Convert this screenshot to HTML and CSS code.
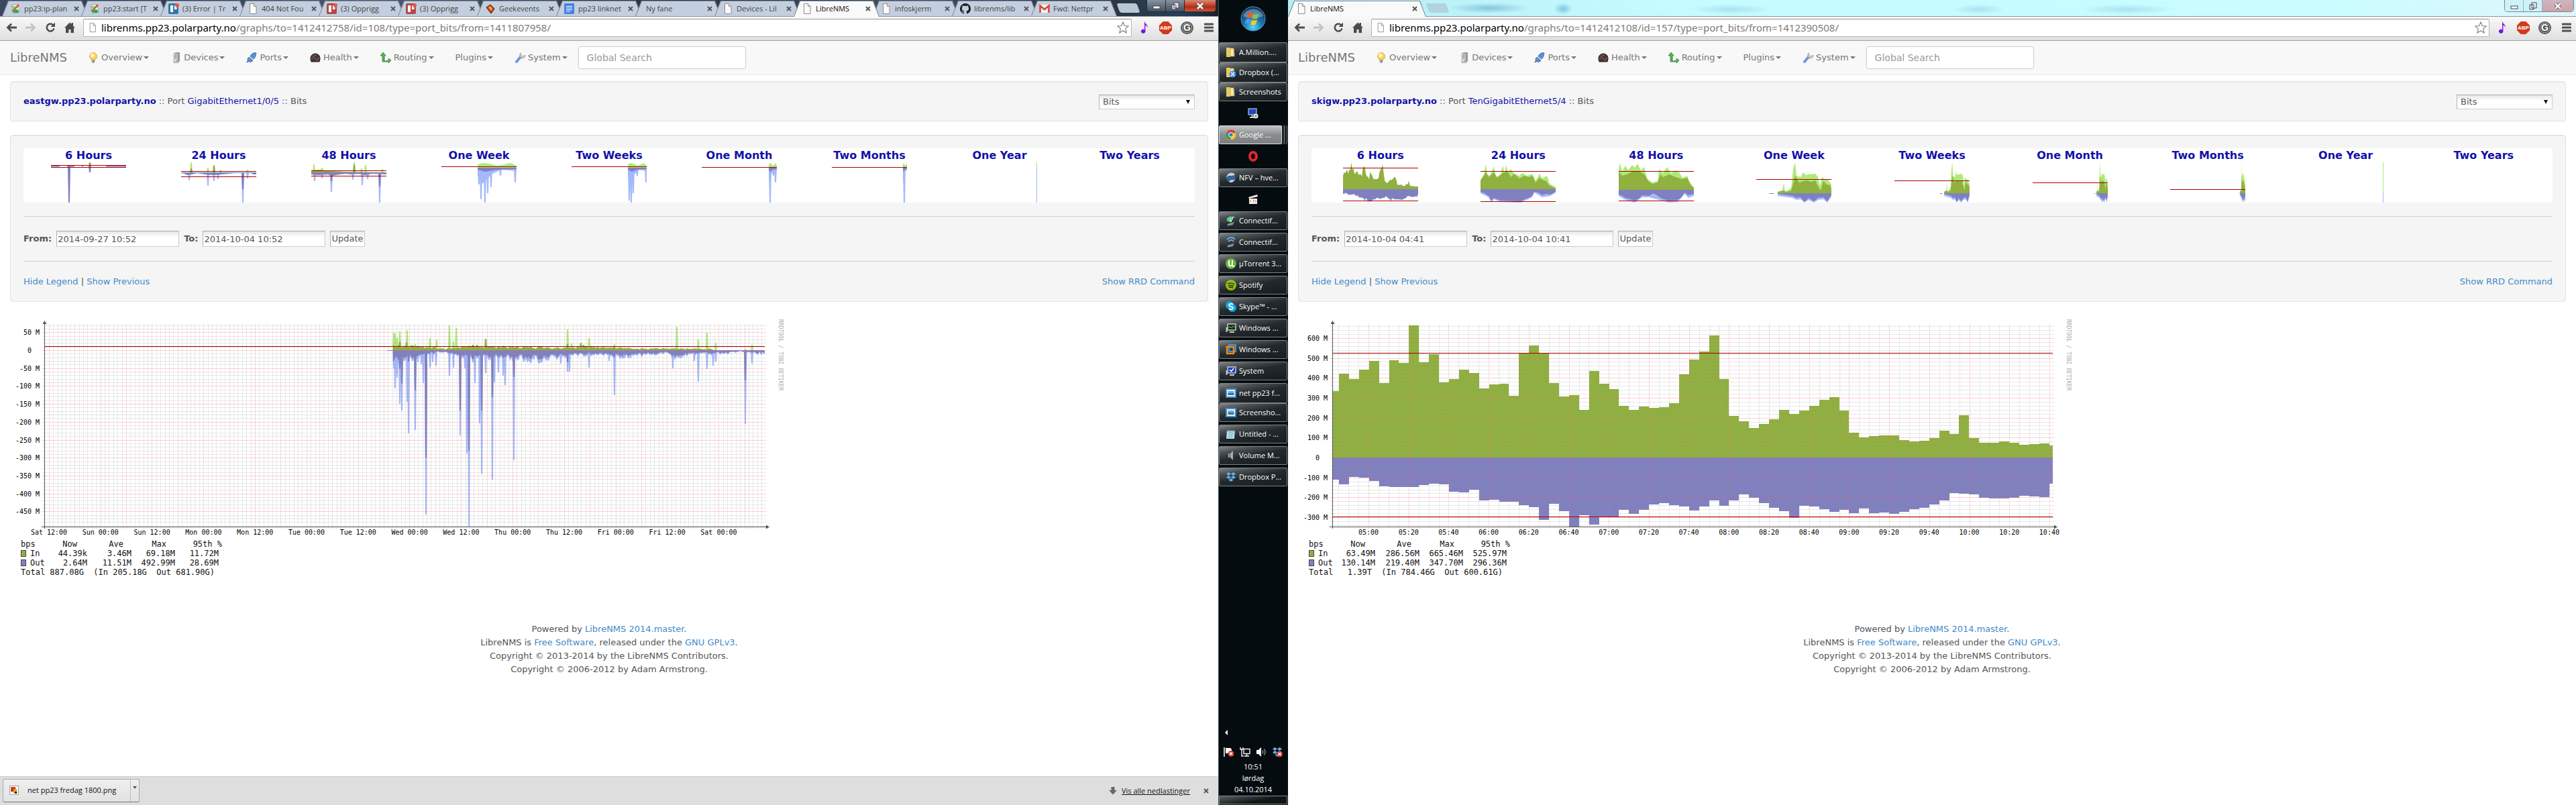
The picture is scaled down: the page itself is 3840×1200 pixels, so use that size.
FILE: index.html
```html
<!DOCTYPE html>
<html lang="en">
<head>
<meta charset="utf-8">
<title>LibreNMS</title>
<link rel="stylesheet" href="styles.css">
</head>
<body>
<svg class="sprite" aria-hidden="true">
  <symbol id="i-page" viewBox="0 0 16 16"><path d="M3.500.500h6l3.500 4v11H3.500z" fill="#fbfbfb" stroke="#8d8d8d"/><path d="M9.500.500v4H13" fill="#ddd" stroke="#8d8d8d"/></symbol>
  <symbol id="i-wiki" viewBox="0 0 16 16"><path d="M2 3l9-2 3 10-9 4z" fill="#f2f2ea" stroke="#888" stroke-width=".7"/><path d="M2 10c2 4 7 6 12 3l-3-4z" fill="#3aa648"/><path d="M5 9l7-8 2 2-7 7-3 1z" fill="#d2552c"/><path d="M3 5h5M3 7h4" stroke="#3aa648"/></symbol>
  <symbol id="i-trello" viewBox="0 0 16 16"><rect width="15" height="16" y="0" rx="2" fill="#2f79a8"/><rect x="3" y="3" width="4" height="10" fill="#fff"/><rect x="9" y="3" width="3.500" height="6" fill="#fff"/><circle cx="13" cy="3" r="3" fill="#f0544f"/></symbol>
  <symbol id="i-trello-red" viewBox="0 0 16 16"><rect width="15" height="16" rx="2" fill="#b04a46"/><rect x="3" y="3" width="4" height="10" fill="#fff"/><rect x="9" y="3" width="3.500" height="6" fill="#fff"/><circle cx="13" cy="3" r="3" fill="#f0544f"/></symbol>
  <symbol id="i-geek" viewBox="0 0 16 16"><path d="M2 6l6-4 6 6-5 7z" fill="#d8421c" stroke="#2a1a10"/><path d="M5 6l3-2 3 4-2 3z" fill="#f7a823"/></symbol>
  <symbol id="i-doc" viewBox="0 0 16 16"><rect x="0" width="15" height="16" rx="1" fill="#4583e6"/><path d="M3 4.500h9M3 7h9M3 9.500h9M3 12h6" stroke="#fff" stroke-width="1.200"/></symbol>
  <symbol id="i-github" viewBox="0 0 16 16"><path d="M8 0a8 8 0 0 0-2.500 15.600c.4 0 .5-.2.500-.4v-1.500c-2.200.5-2.700-1-2.700-1-.4-.9-.9-1.100-.9-1.100-.7-.5.100-.5.100-.5.800.1 1.200.8 1.200.8.700 1.300 1.900.9 2.300.7.100-.5.300-.9.500-1.100C4.700 11.300 2.900 10.600 2.900 7.600c0-.9.300-1.600.8-2.200-.1-.2-.4-1 .1-2.100 0 0 .7-.2 2.200.8a7.700 7.700 0 0 1 4 0c1.500-1 2.200-.8 2.200-.8.400 1.100.2 1.900.1 2.100.5.600.8 1.300.8 2.200 0 3.100-1.900 3.700-3.700 3.900.3.300.6.800.6 1.500v2.200c0 .2.100.5.600.4A8 8 0 0 0 8 0z" fill="#1c2024"/></symbol>
  <symbol id="i-gmail" viewBox="0 0 16 16"><rect y="2" width="16" height="12" rx="1" fill="#f3f3f3"/><path d="M1.500 14V3.500L8 9l6.500-5.500V14" fill="none" stroke="#d5473b" stroke-width="2.600"/></symbol>
  <symbol id="i-x" viewBox="0 0 8 8"><path d="M1 1l6 6M7 1L1 7" stroke="#555" stroke-width="1.800"/></symbol>
  <symbol id="i-back" viewBox="0 0 16 16"><path d="M16 8H3M8 2.500L2.500 8 8 13.500" fill="none" stroke="#4c4c4c" stroke-width="2.800"/></symbol>
  <symbol id="i-fwd" viewBox="0 0 16 16"><path d="M0 8h13M8 2.500L13.500 8 8 13.500" fill="none" stroke="#c3c3c3" stroke-width="2.800"/></symbol>
  <symbol id="i-reload" viewBox="0 0 16 16"><path d="M12.500 4.500A5.500 5.500 0 1 0 13.500 9.500" fill="none" stroke="#4c4c4c" stroke-width="2.600"/><path d="M15 .5V7H8.500z" fill="#4c4c4c"/></symbol>
  <symbol id="i-home" viewBox="0 0 16 16"><path d="M0 8.500L8 .5l2.500 2.500V1h2.500v4.500L16 8.500h-2V16H9.500v-5h-3v5H2V8.500z" fill="#4c4c4c"/></symbol>
  <symbol id="i-star" viewBox="0 0 18 18"><path d="M9 1l2.300 5.500 5.900.5-4.500 3.900L14.100 17 9 13.700 3.900 17l1.400-6.100L.8 7l5.900-.5z" fill="#fff" stroke="#7a7a7a" stroke-width="1.100"/></symbol>
  <symbol id="i-note" viewBox="0 0 14 20"><path d="M7 0c.5 4 5.500 5 5 10-.7-2.700-2.200-3.700-4-4v10.500A3.600 3.200 0 1 1 6.500 13V0z" fill="#7a10f0"/></symbol>
  <symbol id="i-abp" viewBox="0 0 20 20"><path d="M6 0h8l6 6v8l-6 6H6l-6-6V6z" fill="#d23a1c"/></symbol>
  <symbol id="i-g" viewBox="0 0 20 20"><circle cx="10" cy="10" r="9" fill="#fff" stroke="#555" stroke-width="2"/><circle cx="10" cy="10" r="7.500" fill="#555"/></symbol>
  <symbol id="i-menu" viewBox="0 0 14 14"><path d="M1 2h12M1 7h12M1 12h12" stroke="#505050" stroke-width="3" stroke-linecap="round"/></symbol>
  <symbol id="i-bulb" viewBox="0 0 16 16"><circle cx="8" cy="6" r="5.500" fill="#fbd257" stroke="#dba23b" stroke-width=".8"/><circle cx="7" cy="4.500" r="2.800" fill="#fff6cf"/><path d="M5.500 11h5v3l-1.500 2H7l-1.500-2z" fill="#9a9a9a"/></symbol>
  <symbol id="i-server" viewBox="0 0 16 16"><path d="M5 2l3-2h6v13l-3 3H5z" fill="#9b9b9b"/><path d="M5 2h6v13.500H5z" fill="#d9d9d9" stroke="#888" stroke-width=".6"/><path d="M6.500 4.500h3M6.500 6.500h3M6.500 8.500h3" stroke="#777"/><circle cx="9" cy="12.500" r="1" fill="#45b04a"/></symbol>
  <symbol id="i-plug" viewBox="0 0 16 16"><path d="M1 15l4-4" stroke="#4f78b8" stroke-width="2"/><path d="M4 7l6 5c-2 3-5 3-7 1s-1-4 1-6zM7 4c2-3 6-4 8-3-1 4-1 7-4 9L6 6z" fill="#5b8fd6" stroke="#34619f" stroke-width=".8"/></symbol>
  <symbol id="i-gauge" viewBox="0 0 16 16"><path d="M2 14C-1 7 3 2 8 2s9 5 6 12z" fill="#3a3a3a" stroke="#222"/><path d="M4 5l8 8" stroke="#e03a2a" stroke-width="1.300"/><path d="M2.500 9h1.500M8 3.500v1.500M13.500 9H12" stroke="#ccc"/></symbol>
  <symbol id="i-route" viewBox="0 0 16 16"><path d="M4 0l4 5H6v8h3l4-2-1-2 4 3-4 4v-2H3V5H0z" fill="#5cb458" stroke="#2f7c30" stroke-width=".8"/></symbol>
  <symbol id="i-wrench" viewBox="0 0 16 16"><path d="M9 1l1 4 3 1 3-2c0 4-3 5-6 5l-2-2c-1-2 0-5 1-6z" fill="#d5d5d5" stroke="#888" stroke-width=".8"/><path d="M8 8L3 14" stroke="#6b96de" stroke-width="3.800" stroke-linecap="round"/></symbol>
  <symbol id="i-folder" viewBox="0 0 16 16"><path d="M1 1h6v14H1z" fill="#e8c964"/><path d="M7 2h5l1 12H7z" fill="#f6e79f" stroke="#c9a33e" stroke-width=".7"/><path d="M13 9v4" stroke="#4f9ddb" stroke-width="1.500"/></symbol>
  <symbol id="i-dropbox" viewBox="0 0 16 16"><path d="M4.500 1L8 3.500 4.500 6 1 3.500zM11.500 1L15 3.500 11.500 6 8 3.500zM4.500 6L8 8.500 4.500 11 1 8.500zM11.500 6L15 8.500 11.500 11 8 8.500zM8 10l3.500 2.500L8 15l-3.500-2.500z" fill="#5eb3f5"/></symbol>
  <symbol id="i-dbfolder" viewBox="0 0 16 16"><use href="#i-folder"/><circle cx="10.500" cy="10.500" r="5" fill="#3f93dc"/><path d="M8 7.500l5 6M13 7.500l-5 6" stroke="#d9eeff" stroke-width="1.500"/></symbol>
  <symbol id="i-pc" viewBox="0 0 16 16"><rect x="1" y="1" width="12" height="9" fill="#2146c4" stroke="#ddd"/><path d="M3 14h7M6.500 10v4" stroke="#ccc" stroke-width="2"/><circle cx="12" cy="12" r="3.500" fill="#e9f4e6"/><path d="M10 12h4M12 10v4" stroke="#2f9a3c"/></symbol>
  <symbol id="i-chrome" viewBox="0 0 16 16"><circle cx="8" cy="8" r="7.500" fill="#f5c518"/><path d="M8 8L1.500 4.200A7.500 7.500 0 0 1 14.500 4.200z" fill="#dd3b2c"/><path d="M8 8L1.500 4.200A7.500 7.500 0 0 0 7.500 15.500z" fill="#36a045"/><circle cx="8" cy="8" r="3.700" fill="#fff"/><circle cx="8" cy="8" r="2.800" fill="#3f79d9"/></symbol>
  <symbol id="i-opera" viewBox="0 0 16 16"><ellipse cx="8" cy="8" rx="5" ry="6" fill="none" stroke="#e2262d" stroke-width="4"/></symbol>
  <symbol id="i-globe" viewBox="0 0 16 16"><circle cx="8" cy="8" r="7" fill="#38618c"/><path d="M1 8c4-6 7 0 13-5-2-4-12-4-13 5zM5 14c3-5 6-1 9-4-2 5-6 6-9 4z" fill="#b7d1e6"/></symbol>
  <symbol id="i-clip" viewBox="0 0 16 16"><path d="M1 5l13-4 1 3L2 7z" fill="#eee"/><rect x="2" y="7" width="12" height="8" fill="#f5f5f5"/><path d="M4 9v4M7 9h2v4M12 9v4" stroke="#e06c2c" fill="none"/></symbol>
  <symbol id="i-fan" viewBox="0 0 16 16"><path d="M2 9C0 3 6 0 14 2L7 10z" fill="#4bb56e"/><path d="M3 4l5 6M7 2l1 8M11 2L8 10" stroke="#d7f3df"/><path d="M2 15c2-5 6-2 11-6l-2 5c-3 1-6 2-9 1z" fill="#8b9092"/></symbol>
  <symbol id="i-wifi" viewBox="0 0 16 16"><path d="M2 4c4-4 9-4 12 0M4 7c3-3 6-3 8 0" fill="none" stroke="#67a7e4" stroke-width="2"/><path d="M2 15c2-5 6-2 11-6l-2 5c-3 1-6 2-9 1z" fill="#8b9092"/></symbol>
  <symbol id="i-ut" viewBox="0 0 16 16"><circle cx="8" cy="8" r="8" fill="#6cb33f"/><path d="M5 3v6c0 3 5 3 5 0V3M10 9c0 3 1 3 3 3" fill="none" stroke="#fff" stroke-width="2"/></symbol>
  <symbol id="i-spotify" viewBox="0 0 16 16"><circle cx="8" cy="8" r="8" fill="#91be0f"/><path d="M3 6c4-1.500 7-1 10 .6M4 9c3-1 6-.7 8 .6M5 11.500c2-.8 4-.5 6 .5" fill="none" stroke="#222" stroke-width="1.400"/></symbol>
  <symbol id="i-skype" viewBox="0 0 16 16"><circle cx="6" cy="6" r="6" fill="#0aa6ea"/><circle cx="10" cy="10" r="6" fill="#0aa6ea"/><path d="M11 5c-2-2-6-1-6 1 0 3 6 1 6 4 0 2-4 3-6 1" fill="none" stroke="#fff" stroke-width="1.800"/></symbol>
  <symbol id="i-mon" viewBox="0 0 16 16"><rect x="3" y="2" width="12" height="9" fill="#142a16" stroke="#c9c9c9" stroke-width="1.500"/><path d="M4 7l3-1 2 2 2-3 3 2" fill="none" stroke="#4ddb55"/><path d="M6 14h7M1.500 7v7" stroke="#c9c9c9" stroke-width="2"/></symbol>
  <symbol id="i-vm" viewBox="0 0 16 16"><rect x="5" y="1" width="10" height="10" fill="none" stroke="#4a90c8" stroke-width="2.500"/><rect x="2" y="4" width="10" height="10" fill="none" stroke="#f08a1c" stroke-width="2.500"/></symbol>
  <symbol id="i-sys" viewBox="0 0 16 16"><rect x="3" y="2" width="12" height="9" fill="#1c3fc0" stroke="#c9c9c9" stroke-width="1.500"/><path d="M6 6l2.500 2.500L12 4" fill="none" stroke="#fff" stroke-width="1.500"/><path d="M6 14h7M1.500 7v7" stroke="#c9c9c9" stroke-width="2"/></symbol>
  <symbol id="i-pic" viewBox="0 0 16 16"><path d="M0 1h16v14H0z" fill="#3d8fd0"/><rect x="2" y="3" width="12" height="10" fill="#e8f3fa"/><rect x="3.500" y="5" width="9" height="3" fill="#69aee0"/><rect x="3.500" y="8" width="9" height="3" fill="#3c6f86"/></symbol>
  <symbol id="i-pad" viewBox="0 0 16 16"><path d="M2 2h12l-1 13H1z" fill="#b7e0ec"/><path d="M2 2h12v2H2z" fill="#6b8d99"/><path d="M4 6h8M4 9h8M3 12h8" stroke="#6ba7bb"/></symbol>
  <symbol id="i-vol" viewBox="0 0 16 16"><path d="M4 5h2v6H4zM7 5l4-4v14l-4-4z" fill="#a9adb0"/></symbol>
  <symbol id="i-flag" viewBox="0 0 16 16"><path d="M1 1v14" stroke="#fff" stroke-width="1.500"/><path d="M3 2h7l2 2v6H3z" fill="#fff"/><circle cx="11" cy="10.500" r="4.500" fill="#d63a2c"/><path d="M9 8.500l4 4M13 8.500l-4 4" stroke="#fff" stroke-width="1.400"/></symbol>
  <symbol id="i-net" viewBox="0 0 16 16"><path d="M1 1v3h4V1M3 4v10h3" fill="none" stroke="#fff" stroke-width="1.300"/><rect x="6" y="3.500" width="9" height="7" fill="#111" stroke="#fff" stroke-width="1.300"/><path d="M7 14h7M10.500 11v3" stroke="#fff" stroke-width="1.300"/></symbol>
  <symbol id="i-sound" viewBox="0 0 16 16"><path d="M1 5h3v6H1zM4 5l4-4v14l-4-4z" fill="#fff"/><path d="M10 5.500c1 1.500 1 3.500 0 5M12.500 3.500c2 3 2 6 0 9" fill="none" stroke="#ddd"/></symbol>
  <symbol id="i-dberr" viewBox="0 0 16 16"><use href="#i-dropbox"/><circle cx="11.500" cy="11" r="4.500" fill="#d63a3c"/><path d="M9.500 9l4 4M13.500 9l-4 4" stroke="#fff" stroke-width="1.400"/></symbol>
  <symbol id="i-down" viewBox="0 0 12 12"><path d="M3.500 0h5v5H12l-6 6.500L0 5h3.500z" fill="#686868"/></symbol>
  <symbol id="i-png" viewBox="0 0 16 16"><rect x=".500" y=".500" width="15" height="15" fill="#fff" stroke="#999"/><path d="M2.500 2.500h8v8h-8z" fill="#c7321d"/><path d="M7 6h6v7H7z" fill="#e9a21c"/><circle cx="11" cy="12" r="2" fill="#222"/></symbol>
</svg>

<div class="desktop">

<section class="window left">
  <header class="strip">
    <div class="tabs">
      <div class="tab"><svg class="ic"><use href="#i-wiki"/></svg><span>pp23:ip-plan</span><svg class="x"><use href="#i-x"/></svg></div>
      <div class="tab"><svg class="ic"><use href="#i-wiki"/></svg><span>pp23:start [T</span><svg class="x"><use href="#i-x"/></svg></div>
      <div class="tab"><svg class="ic"><use href="#i-trello"/></svg><span>(3) Error | Tr</span><svg class="x"><use href="#i-x"/></svg></div>
      <div class="tab"><svg class="ic"><use href="#i-page"/></svg><span>404 Not Fou</span><svg class="x"><use href="#i-x"/></svg></div>
      <div class="tab"><svg class="ic"><use href="#i-trello-red"/></svg><span>(3) Opprigg</span><svg class="x"><use href="#i-x"/></svg></div>
      <div class="tab"><svg class="ic"><use href="#i-trello-red"/></svg><span>(3) Opprigg</span><svg class="x"><use href="#i-x"/></svg></div>
      <div class="tab"><svg class="ic"><use href="#i-geek"/></svg><span>Geekevents</span><svg class="x"><use href="#i-x"/></svg></div>
      <div class="tab"><svg class="ic"><use href="#i-doc"/></svg><span>pp23 linknet</span><svg class="x"><use href="#i-x"/></svg></div>
      <div class="tab plain"><span>Ny fane</span><svg class="x"><use href="#i-x"/></svg></div>
      <div class="tab"><svg class="ic"><use href="#i-page"/></svg><span>Devices - Lil</span><svg class="x"><use href="#i-x"/></svg></div>
      <div class="tab active"><svg class="ic"><use href="#i-page"/></svg><span>LibreNMS</span><svg class="x"><use href="#i-x"/></svg></div>
      <div class="tab"><svg class="ic"><use href="#i-page"/></svg><span>infoskjerm</span><svg class="x"><use href="#i-x"/></svg></div>
      <div class="tab"><svg class="ic"><use href="#i-github"/></svg><span>librenms/lib</span><svg class="x"><use href="#i-x"/></svg></div>
      <div class="tab"><svg class="ic"><use href="#i-gmail"/></svg><span>Fwd: Nettpr</span><svg class="x"><use href="#i-x"/></svg></div>
      <button class="newtab" aria-label="New tab"></button>
    </div>
    <div class="winctl">
      <button aria-label="Minimize"><svg viewBox="0 0 12 12"><rect x="1" y="6" width="10" height="4" fill="#fff" stroke="#445"/></svg></button>
      <button aria-label="Restore"><svg viewBox="0 0 12 12"><path d="M4 1h7v8H4zM1 4h6v7H1z" fill="#eee" stroke="#445"/></svg></button>
      <button class="close" aria-label="Close"><svg viewBox="0 0 12 12"><path d="M2 2l8 8M10 2l-8 8" stroke="#445" stroke-width="4"/><path d="M2 2l8 8M10 2l-8 8" stroke="#fff" stroke-width="2.500"/></svg></button>
    </div>
  </header>
  <div class="toolbar">
    <svg class="tb"><use href="#i-back"/></svg><svg class="tb"><use href="#i-fwd"/></svg><svg class="tb"><use href="#i-reload"/></svg><svg class="tb"><use href="#i-home"/></svg>
    <div class="omnibox"><svg class="ic"><use href="#i-page"/></svg><span class="url"><b>librenms.pp23.polarparty.no</b>/graphs/to=1412412758/id=108/type=port_bits/from=1411807958/</span><svg class="star"><use href="#i-star"/></svg></div>
    <div class="ext"><svg class="note"><use href="#i-note"/></svg><span class="badge"><svg><use href="#i-abp"/></svg><b>ABP</b></span><span class="badge g"><svg><use href="#i-g"/></svg><b>G</b></span><svg class="menu"><use href="#i-menu"/></svg></div>
  </div>
  <nav class="navbar">
    <a class="brand" href="#">LibreNMS</a>
    <a class="item" href="#"><svg><use href="#i-bulb"/></svg>Overview<i></i></a>
    <a class="item" href="#"><svg><use href="#i-server"/></svg>Devices<i></i></a>
    <a class="item" href="#"><svg><use href="#i-plug"/></svg>Ports<i></i></a>
    <a class="item" href="#"><svg><use href="#i-gauge"/></svg>Health<i></i></a>
    <a class="item" href="#"><svg><use href="#i-route"/></svg>Routing<i></i></a>
    <a class="item" href="#">Plugins<i></i></a>
    <a class="item" href="#"><svg><use href="#i-wrench"/></svg>System<i></i></a>
    <input class="search" type="text" placeholder="Global Search" aria-label="Global Search">
  </nav>
  <main class="content">
    <div class="well head">
      <div><a class="dev" href="#">eastgw.pp23.polarparty.no</a> :: Port <a class="port" href="#">GigabitEthernet1/0/5</a> :: Bits</div>
      <div class="pick"><select aria-label="Graph type"><option>Bits</option></select></div>
    </div>
    <div class="well">
      <div class="thumbs" data-set="east">
        <a href="#">6 Hours</a><a href="#">24 Hours</a><a href="#">48 Hours</a><a href="#">One Week</a><a href="#">Two Weeks</a><a href="#">One Month</a><a href="#">Two Months</a><a href="#">One Year</a><a href="#">Two Years</a>
      </div>
      <hr>
      <form class="range">
        <label for="from1">From:</label><input id="from1" type="text" value="2014-09-27 10:52">
        <label for="to1">To:</label><input id="to1" type="text" value="2014-10-04 10:52">
        <button type="button">Update</button>
      </form>
      <hr>
      <div class="links"><span><a href="#">Hide Legend</a> | <a href="#">Show Previous</a></span><a href="#">Show RRD Command</a></div>
    </div>
    <div class="graph" id="graph-east"></div>
    <table class="legend">
      <tr><th>bps</th><th>Now</th><th>Ave</th><th>Max</th><th>95th %</th></tr>
      <tr><td><span class="key in"></span>In</td><td>44.39k</td><td>3.46M</td><td>69.18M</td><td>11.72M</td></tr>
      <tr><td><span class="key out"></span>Out</td><td>2.64M</td><td>11.51M</td><td>492.99M</td><td>28.69M</td></tr>
      <tr><td colspan="5">Total 887.08G&nbsp; (In 205.18G&nbsp; Out 681.90G)</td></tr>
    </table>
    <footer>
      <div>Powered by <a href="#">LibreNMS 2014.master</a>.</div>
      <div>LibreNMS is <a href="#">Free Software</a>, released under the <a href="#">GNU GPLv3</a>.</div>
      <div>Copyright © 2013-2014 by the LibreNMS Contributors.</div>
      <div>Copyright © 2006-2012 by Adam Armstrong.</div>
    </footer>
  </main>
  <div class="downloads">
    <div class="dl"><button class="file"><svg><use href="#i-png"/></svg>net pp23 fredag 1800.png</button><button class="more" aria-label="More"><i></i></button></div>
    <div class="all"><svg><use href="#i-down"/></svg><a href="#">Vis alle nedlastinger</a><svg class="x"><use href="#i-x"/></svg></div>
  </div>
</section>

<aside class="taskbar">
  <button class="orb" aria-label="Start"><svg viewBox="0 0 38 38">
    <defs><radialGradient id="orbfill" cx=".5" cy=".85" r=".8"><stop offset="0" stop-color="#4fd8ff"/><stop offset=".5" stop-color="#1b6fae"/><stop offset="1" stop-color="#0d3a63"/></radialGradient></defs>
    <circle cx="19" cy="19" r="18" fill="url(#orbfill)" stroke="#5f94b4"/><path d="M4 15a15.500 14 0 0 1 30 0c-8 4-22 4-30 0z" fill="#fff" opacity=".3"/>
    <path d="M11 11c3-2 5-1 7 0l-2 7c-2-1-4-2-7 0z" fill="#f0592a"/><path d="M19.500 11.500c3 2 5 1 8 0l-2 7c-3 1.500-5 1-8 0z" fill="#8cc63f"/><path d="M8.500 20c3-2 5-1 7 0l-2 7c-2-1-4-2-7 0z" fill="#3ea5e8"/><path d="M17 20.500c3 2 5 1 8 0l-2 7c-3 1.500-5 1-8 0z" fill="#fcc62c"/></svg></button>
  <div class="group"><button class="task"><svg><use href="#i-folder"/></svg>A.Million....</button><button class="task"><svg><use href="#i-dbfolder"/></svg>Dropbox (...</button><button class="task"><svg><use href="#i-folder"/></svg>Screenshots</button></div>
  <button class="task bare" aria-label="Remote desktop"><svg><use href="#i-pc"/></svg></button>
  <button class="task lit"><svg><use href="#i-chrome"/></svg>Google ...</button>
  <button class="task bare" aria-label="Opera"><svg><use href="#i-opera"/></svg></button>
  <button class="task"><svg><use href="#i-globe"/></svg>NFV – hve...</button>
  <button class="task bare" aria-label="Media player"><svg><use href="#i-clip"/></svg></button>
  <button class="task"><svg><use href="#i-fan"/></svg>Connectif...</button>
  <button class="task"><svg><use href="#i-wifi"/></svg>Connectif...</button>
  <button class="task"><svg><use href="#i-ut"/></svg>µTorrent 3...</button>
  <button class="task"><svg><use href="#i-spotify"/></svg>Spotify</button>
  <button class="task"><svg><use href="#i-skype"/></svg>Skype™ - ...</button>
  <button class="task"><svg><use href="#i-mon"/></svg>Windows ...</button>
  <button class="task"><svg><use href="#i-vm"/></svg>Windows ...</button>
  <button class="task"><svg><use href="#i-sys"/></svg>System</button>
  <div class="group"><button class="task"><svg><use href="#i-pic"/></svg>net pp23 f...</button><button class="task"><svg><use href="#i-pic"/></svg>Screensho...</button></div>
  <button class="task"><svg><use href="#i-pad"/></svg>Untitled - ...</button>
  <button class="task"><svg><use href="#i-vol"/></svg>Volume M...</button>
  <button class="task"><svg><use href="#i-dropbox"/></svg>Dropbox P...</button>
  <div class="tray">
    <i class="chev"></i>
    <div class="trayicons"><svg><use href="#i-flag"/></svg><svg><use href="#i-net"/></svg><svg><use href="#i-sound"/></svg><svg><use href="#i-dberr"/></svg></div>
    <div class="clock"><div>10:51</div><div>lørdag</div><div>04.10.2014</div></div>
    <button class="peek" aria-label="Show desktop"></button>
  </div>
</aside>

<section class="window right">
  <header class="strip">
    <div class="tabs">
      <div class="tab active"><svg class="ic"><use href="#i-page"/></svg><span>LibreNMS</span><svg class="x"><use href="#i-x"/></svg></div>
      <button class="newtab" aria-label="New tab"></button>
    </div>
    <div class="winctl">
      <button aria-label="Minimize"><svg viewBox="0 0 12 12"><rect x="1" y="6" width="10" height="4" fill="#fff" stroke="#445"/></svg></button>
      <button aria-label="Restore"><svg viewBox="0 0 12 12"><path d="M4 1h7v8H4zM1 4h6v7H1z" fill="#eee" stroke="#445"/></svg></button>
      <button class="close" aria-label="Close"><svg viewBox="0 0 12 12"><path d="M2 2l8 8M10 2l-8 8" stroke="#445" stroke-width="4"/><path d="M2 2l8 8M10 2l-8 8" stroke="#fff" stroke-width="2.500"/></svg></button>
    </div>
  </header>
  <div class="toolbar">
    <svg class="tb"><use href="#i-back"/></svg><svg class="tb"><use href="#i-fwd"/></svg><svg class="tb"><use href="#i-reload"/></svg><svg class="tb"><use href="#i-home"/></svg>
    <div class="omnibox"><svg class="ic"><use href="#i-page"/></svg><span class="url"><b>librenms.pp23.polarparty.no</b>/graphs/to=1412412108/id=157/type=port_bits/from=1412390508/</span><svg class="star"><use href="#i-star"/></svg></div>
    <div class="ext"><svg class="note"><use href="#i-note"/></svg><span class="badge"><svg><use href="#i-abp"/></svg><b>ABP</b></span><span class="badge g"><svg><use href="#i-g"/></svg><b>G</b></span><svg class="menu"><use href="#i-menu"/></svg></div>
  </div>
  <nav class="navbar">
    <a class="brand" href="#">LibreNMS</a>
    <a class="item" href="#"><svg><use href="#i-bulb"/></svg>Overview<i></i></a>
    <a class="item" href="#"><svg><use href="#i-server"/></svg>Devices<i></i></a>
    <a class="item" href="#"><svg><use href="#i-plug"/></svg>Ports<i></i></a>
    <a class="item" href="#"><svg><use href="#i-gauge"/></svg>Health<i></i></a>
    <a class="item" href="#"><svg><use href="#i-route"/></svg>Routing<i></i></a>
    <a class="item" href="#">Plugins<i></i></a>
    <a class="item" href="#"><svg><use href="#i-wrench"/></svg>System<i></i></a>
    <input class="search" type="text" placeholder="Global Search" aria-label="Global Search">
  </nav>
  <main class="content">
    <div class="well head">
      <div><a class="dev" href="#">skigw.pp23.polarparty.no</a> :: Port <a class="port" href="#">TenGigabitEthernet5/4</a> :: Bits</div>
      <div class="pick"><select aria-label="Graph type"><option>Bits</option></select></div>
    </div>
    <div class="well">
      <div class="thumbs" data-set="ski">
        <a href="#">6 Hours</a><a href="#">24 Hours</a><a href="#">48 Hours</a><a href="#">One Week</a><a href="#">Two Weeks</a><a href="#">One Month</a><a href="#">Two Months</a><a href="#">One Year</a><a href="#">Two Years</a>
      </div>
      <hr>
      <form class="range">
        <label for="from2">From:</label><input id="from2" type="text" value="2014-10-04 04:41">
        <label for="to2">To:</label><input id="to2" type="text" value="2014-10-04 10:41">
        <button type="button">Update</button>
      </form>
      <hr>
      <div class="links"><span><a href="#">Hide Legend</a> | <a href="#">Show Previous</a></span><a href="#">Show RRD Command</a></div>
    </div>
    <div class="graph" id="graph-ski"></div>
    <table class="legend">
      <tr><th>bps</th><th>Now</th><th>Ave</th><th>Max</th><th>95th %</th></tr>
      <tr><td><span class="key in"></span>In</td><td>63.49M</td><td>286.56M</td><td>665.46M</td><td>525.97M</td></tr>
      <tr><td><span class="key out"></span>Out</td><td>130.14M</td><td>219.40M</td><td>347.70M</td><td>296.36M</td></tr>
      <tr><td colspan="5">Total&nbsp;&nbsp; 1.39T&nbsp; (In 784.46G&nbsp; Out 600.61G)</td></tr>
    </table>
    <footer>
      <div>Powered by <a href="#">LibreNMS 2014.master</a>.</div>
      <div>LibreNMS is <a href="#">Free Software</a>, released under the <a href="#">GNU GPLv3</a>.</div>
      <div>Copyright © 2013-2014 by the LibreNMS Contributors.</div>
      <div>Copyright © 2006-2012 by Adam Armstrong.</div>
    </footer>
  </main>
</section>
</div>
<script src="graphs.js"></script>
</body>
</html>
```
FILE: styles.css
```css
* { box-sizing: border-box; }
body { margin: 0; font: 13px/20px "DejaVu Sans", sans-serif; color: #555; background: #fff; }
a { color: #428bca; text-decoration: none; }
button, input, select { font: inherit; color: inherit; margin: 0; padding: 0; border: 0; background: none; border-radius: 0; }
svg { display: block; flex: none; }
.sprite { position: absolute; width: 0; height: 0; }

.desktop { display: grid; grid-template-columns: minmax(0, 1816fr) 104px minmax(0, 1920fr); min-height: 100vh; }
.window { display: flex; flex-direction: column; min-width: 0; background: #fff; }

/* tab strip */
.strip { display: flex; justify-content: space-between; height: 25px; border-bottom: 1px solid #8b98a5; font: 11px/16px "Open Sans", sans-serif; color: #444; }
.left .strip { background: linear-gradient(90deg, #3a4860 0, #323c4c 12%, #4a5a72 30%, #2e333c 55%, #3c5064 75%, #30353b 90%, #23405a 97%, #1b2128 100%); }
.right .strip { background:
  radial-gradient(ellipse 60px 8px at 300px 12px, rgba(80, 150, 190, .5), transparent),
  radial-gradient(ellipse 14px 9px at 410px 13px, rgba(60, 150, 200, .5), transparent),
  radial-gradient(ellipse 60px 8px at 660px 14px, rgba(120, 190, 215, .4), transparent),
  radial-gradient(ellipse 40px 8px at 1030px 14px, rgba(120, 190, 215, .4), transparent),
  radial-gradient(ellipse 70px 8px at 1250px 14px, rgba(120, 190, 215, .4), transparent),
  linear-gradient(90deg, #b4ecf4, #c6fbff 30%, #c9fdff 80%, #def6fb); }
.tabs { display: flex; align-items: flex-end; padding-left: 3px; min-width: 0; }
.right .tabs { padding-left: 0; }
.tab { position: relative; display: flex; align-items: center; width: 128px; height: 23px; margin-right: -10px; padding: 0 13px 0 12px; background: #7d8b9c; clip-path: polygon(0 100%, 9px 0, calc(100% - 9px) 0, 100% 100%); isolation: isolate; }
.tab::before { content: ""; position: absolute; inset: 1px 1px 0; z-index: -1; background: #c3cfdf; clip-path: polygon(0 100%, 9px 0, calc(100% - 9px) 0, 100% 100%); }
.tab.active { z-index: 1; height: 24px; margin-bottom: -1px; color: #111; }
.tab.active::before { background: #f9f9f9; }
.right .tab.active { width: 206px; }
.tab .ic { width: 16px; height: 16px; margin-right: 5px; }
.tab.plain { padding-left: 16px; }
.tab span { flex: 1; white-space: nowrap; }
.x { width: 8px; height: 8px; margin-left: 3px; }
.newtab { width: 30px; height: 14px; margin: 0 0 5px 12px; background: #b9c8d5; border-radius: 3px; transform: skewX(20deg); }
.right .newtab { background: #b0d3dc; }
.winctl { display: flex; height: 18px; margin-right: 3px; border: 1px solid #222b35; border-top: 0; border-radius: 0 0 5px 5px; overflow: hidden; }
.winctl button { display: flex; align-items: center; justify-content: center; width: 28px; background: linear-gradient(#8592a0, #46515e); border-right: 1px solid #222b35; }
.winctl .close { width: 46px; border: 0; background: linear-gradient(#d98a76, #b32d16 60%, #d0533a); }
.winctl svg { width: 12px; height: 12px; }
.right .winctl { border-color: #6f8b96; }
.right .winctl button { background: #cdf3f8; border-color: #8fb0ba; }
.right .winctl .close { background: linear-gradient(#cbb7c0, #d2a2a6); }

/* toolbar */
.toolbar { display: flex; align-items: center; height: 36px; padding: 0 7px 3px 9px; gap: 13px; background: linear-gradient(#f9f9f9, #dfdfdf); border-bottom: 1px solid #a3a3a3; }
.tb { width: 16px; height: 16px; }
.omnibox { display: flex; align-items: center; flex: 1; min-width: 0; height: 27px; margin-left: -1px; padding: 0 3px 0 6px; background: #fff; border: 1px solid #b4b4b4; border-top: 1px solid #979797; border-radius: 2px; font: 15px/20px "Noto Sans", sans-serif; color: #7c7c7c; }
.omnibox .ic { width: 14px; height: 16px; margin-right: 6px; }
.url { flex: 1; white-space: nowrap; overflow: hidden; }
.url b { font-weight: 400; color: #000; }
.star { width: 18px; height: 18px; }
.ext { display: flex; align-items: center; gap: 13px; }
.note { width: 13px; height: 19px; margin-right: 2px; }
.badge { position: relative; width: 19px; height: 19px; }
.badge svg { width: 19px; height: 19px; }
.badge b { position: absolute; inset: 0; text-align: center; font: bold 8px/19px "Liberation Sans", sans-serif; color: #fff; }
.badge.g b { font-size: 14px; }
.menu { width: 14px; height: 14px; margin-left: 3px; }

/* site navigation */
.navbar { display: flex; align-items: center; height: 51px; background: #f8f8f8; border-bottom: 1px solid #e7e7e7; }
.navbar a { color: #777; }
.brand { padding: 0 15px; font-size: 18px; }
.item { display: flex; align-items: center; padding: 0 16px; }
.item svg { width: 16px; height: 16px; margin-right: 4px; }
.item i { margin-left: 2px; border: 4px solid transparent; border-top-color: #777; border-bottom: 0; }
.search { width: 250px; height: 34px; padding: 0 12px; background: #fff; border: 1px solid #ccc; border-radius: 4px; font-size: 14px; color: #555; }
.search::placeholder { color: #999; opacity: 1; }

/* content */
.content { flex: 1; padding: 9px 15px 0; }
.well { margin-bottom: 20px; padding: 19px; background: #f5f5f5; border: 1px solid #e3e3e3; border-radius: 4px; box-shadow: inset 0 1px 1px rgba(0, 0, 0, .05); }
.head { display: flex; justify-content: space-between; height: 60px; }
.dev { font-weight: bold; color: #1111aa; }
.port { color: #1111aa; }
.pick { position: relative; height: 22px; }
.pick::after { content: ""; position: absolute; right: 7px; top: 8px; border: 3px solid transparent; border-top: 6px solid #111; border-bottom: 0; }
select { appearance: none; width: 143px; height: 22px; padding-left: 5px; }
select, .range input, .range button { background: linear-gradient(#e6e6e6, #fff 8px); border: 1px solid #ccc; border-top-color: #a9a9a9; border-left-color: #b5b5b5; }
.thumbs { display: grid; grid-template-columns: repeat(9, 1fr); height: 81px; background: #fff; }
.thumbs a { display: flex; flex-direction: column; align-items: center; font-size: 16px; line-height: 21px; font-weight: bold; color: #1111aa; }
.thumbs svg { width: 112px; height: 60px; }
hr { height: 1px; margin: 20px 0; border: 0; background: #ccc; }
.range { display: flex; align-items: center; height: 26px; gap: 7px; }
.range label { font-weight: bold; }
.range input { width: 183px; height: 24px; padding: 0 1px; }
.range button { height: 24px; padding: 0 1px; }
.links { display: flex; justify-content: space-between; }
.graph svg { width: 1160px; height: 334px; font: 10px "DejaVu Sans Mono", monospace; }
.legend { margin-left: 16px; border-collapse: collapse; table-layout: fixed; width: 300px; font: 12px/14px "DejaVu Sans Mono", monospace; color: #111; white-space: nowrap; }
.legend td, .legend th { padding: 0; font-weight: 400; text-align: right; }
.legend th:first-child, .legend td:first-child { width: 34px; text-align: left; }
.legend th:nth-child(2) { width: 65px; padding-right: 15px; }
.legend th:nth-child(3) { width: 66px; padding-right: 12px; }
.legend th:nth-child(4) { width: 65px; padding-right: 13px; }
.legend th:nth-child(5) { width: 70px; }
.legend td:nth-child(5) { padding-right: 5px; }
.key { display: inline-block; width: 8px; height: 10px; margin-right: 6px; border: 1px solid #444; vertical-align: -1px; }
.key.in { background: #90b040; }
.key.out { background: #8080c0; }
footer { margin-top: 68px; text-align: center; }

/* downloads bar */
.downloads { display: flex; justify-content: space-between; align-items: center; height: 43px; padding: 0 14px 0 4px; background: #dedede; border-top: 1px solid #cdcdcd; font: 11px/16px "Open Sans", sans-serif; color: #111; }
.dl { display: flex; height: 35px; margin-bottom: 2px; background: linear-gradient(#efefef, #e2e2e2); border: 1px solid #aaa; border-bottom-color: #777; border-radius: 3px; }
.file { display: flex; align-items: center; width: 189px; padding-left: 8px; gap: 12px; white-space: nowrap; }
.file svg { width: 16px; height: 14px; }
.more { width: 13px; border-left: 1px solid #bbb; }
.more i { display: block; margin: -6px 3px 0; border: 3px solid transparent; border-top: 4px solid #555; border-bottom: 0; }
.all { display: flex; align-items: center; gap: 7px; }
.all svg { width: 12px; height: 12px; }
.all .x { width: 8px; height: 8px; margin-left: 13px; }
.all a { color: #111; text-decoration: underline; }

/* taskbar */
.taskbar { display: flex; flex-direction: column; gap: 4px; padding: 9px 1px 1px 0; background: #050c10; border-left: 1px solid #46545e; color: #fff; font: 11px/16px "Open Sans", sans-serif; }
.orb { align-self: center; width: 38px; height: 38px; margin-bottom: 12px; }
.orb svg { width: 38px; height: 38px; }
.task { display: flex; align-items: center; flex: none; width: 100%; height: 28px; padding-left: 9px; gap: 4px; white-space: nowrap; background: linear-gradient(170deg, #84888b 0, #4b5053 22%, #23292c 48%, #161c1f 100%); border: 1px solid #7d8285; border-radius: 2px; }
.task svg { width: 16px; height: 16px; }
.group .task:not(:last-child) { height: 30px; }
.bare { justify-content: center; padding: 0; background: none; border-color: transparent; }
.lit { width: 94px; background: linear-gradient(#c0c2c3, #8b8e90 50%, #7c7f81); border-color: #ddd; box-shadow: 3px 0 0 #1a1f22, 4px 0 0 #888, 7px 0 0 #1a1f22, 8px 0 0 #666; }
.tray { display: flex; flex-direction: column; align-items: center; margin-top: auto; }
.chev { align-self: flex-start; margin: 0 0 17px 9px; border: 4px solid transparent; border-right-color: #fff; border-left: 0; }
.trayicons { display: flex; gap: 8px; margin-bottom: 5px; }
.trayicons svg { width: 16px; height: 16px; }
.clock { text-align: center; line-height: 17px; margin-bottom: 1px; }
.peek { width: 100%; height: 13px; background: linear-gradient(170deg, #5a5f62, #101518 60%); border: 1px solid #7d8285; }

@media (max-width: 2600px) {
  .desktop { grid-template-columns: minmax(0, 1fr) 104px; }
  .window.right { display: none; }
}
```
FILE: graphs.js
```js
(function () {
  var IN = '#90b040', OUT = '#8080c0', IN_MAX = '#aeea78', OUT_MAX = '#a4b8fc', P95 = '#aa0000';

  function area(points, base, fill) {
    var d = 'M' + points[0][0] + ' ' + base;
    points.forEach(function (p) { d += 'L' + p[0] + ' ' + p[1]; });
    return '<path d="' + d + 'L' + points[points.length - 1][0] + ' ' + base + 'z" fill="' + fill + '"/>';
  }
  function spikes(list, base, dir, fill) {
    var d = '';
    list.forEach(function (s) {
      var x = s[0], y = base + dir * s[1];
      d += 'M' + (x - 2) + ' ' + base + 'L' + (x - 1) + ' ' + y + 'h2L' + (x + 2) + ' ' + base + 'z';
    });
    return '<path d="' + d + '" fill="' + fill + '"/>';
  }
  function hline(y, x1, x2) {
    return '<rect x="' + x1 + '" y="' + y + '" width="' + (x2 - x1) + '" height="1" fill="' + P95 + '"/>';
  }
  function line(x1, y1, x2, y2, color) {
    return '<path d="M' + x1 + ' ' + y1 + 'L' + x2 + ' ' + y2 + '" stroke="' + color + '" stroke-dasharray="1 1"/>';
  }
  function snap(v) { return Math.round(v) + 0.5; }

  /* plot frame: left 51, right 1125, top 13, bottom 315 */
  function chart(o) {
    var s = '', x, y, i, n;
    s += o.areas;
    for (i = 0, x = o.vx; x <= 1126; i++, x = o.vx + i * o.vstep) {
      s += line(snap(x), 13, snap(x), 318, i % o.vmajor === o.vphase ? 'rgba(238,110,110,.5)' : 'rgba(140,140,140,.35)');
    }
    for (n = o.nmin; n <= o.nmax; n++) {
      y = snap(o.zero - n * o.hstep);
      s += line(48, y, 1128, y, n % 5 === 0 ? 'rgba(245,100,100,.6)' : 'rgba(140,140,140,.4)');
      if (n % 5 === 0) {
        s += '<text x="' + (n ? 44 : 32) + '" y="' + (y + 3.5) + '" text-anchor="end">' + (n ? n * o.unit + ' M' : '0') + '</text>';
      }
    }
    o.p95.forEach(function (v) { s += hline(v, 51, 1125); });
    s += '<path d="M51.500 12V318M47 315.500H1129" stroke="#555" fill="none"/><path d="M51.500 8l3 5h-6zM1132 315.500l-5-3v6z" fill="#555"/>';
    o.labels.forEach(function (t, k) {
      s += '<text x="' + (o.lx + k * o.lstep) + '" y="327" text-anchor="middle">' + t + '</text>';
    });
    s += '<text transform="translate(1146 6) rotate(90)" font-size="8" fill="#aaa">RRDTOOL / TOBI OETIKER</text>';
    return '<svg viewBox="0 0 1160 334">' + s + '</svg>';
  }

  /* skigw, five-minute samples */
  var skiIn = [99,125,117,131,144,111,145,141,197,142,154,112,117,131,126,103,109,110,92,156,167,156,111,91,93,71,129,110,102,77,71,76,74,75,81,124,146,158,182,117,62,54,44,50,57,71,65,70,77,86,90,70,37,30,32,33,33,26,24,25,29,40,35,63,29,22,22,24,22,19,20,21,18];
  var skiOut = [33,40,29,30,35,43,44,44,44,41,39,40,51,52,48,64,63,66,66,71,74,93,69,80,103,86,100,89,89,78,84,78,70,68,71,73,79,73,64,72,64,55,60,68,75,80,90,72,73,77,81,78,83,76,83,82,84,81,77,75,70,64,53,54,55,60,61,61,60,57,58,59,39];
  function steps(vals, base, dir) {
    var pts = [];
    vals.forEach(function (v, k) {
      var a = k ? 61 + (k - 1) * 14.91 : 51, b = Math.min(61 + k * 14.91, 1125);
      pts.push([Math.round(a), base + dir * v], [Math.round(b), base + dir * v]);
    });
    return pts;
  }
  document.getElementById('graph-ski').innerHTML = chart({
    areas: area(steps(skiIn, 212, -1), 212, IN) + area(steps(skiOut, 212, 1), 212, OUT),
    vx: 60.3, vstep: 14.925, vmajor: 4, vphase: 3,
    nmin: -17, nmax: 33, zero: 212, hstep: 5.94, unit: 20,
    p95: [56, 300], lx: 105, lstep: 59.7,
    labels: ['05:00','05:20','05:40','06:00','06:20','06:40','07:00','07:20','07:40','08:00','08:20','08:40','09:00','09:20','09:40','10:00','10:20','10:40']
  });

  /* eastgw: [x, height] of peaks and of the busy baseline */
  function shift(l) { return l.map(function (p) { return [p[0] - 15, p[1]]; }); }
  var outMax = shift([[587,27],[589,57],[592,41],[596,80],[599,90],[607,77],[609,124],[619,119],[623,18],[628,21],[631,49],[635,245],[641,26],[645,18],[650,23],[670,38],[676,26],[686,127],[693,27],[696,154],[699,263],[708,49],[715,109],[718,184],[724,34],[734,193],[737,48],[743,33],[750,38],[753,52],[764,16],[766,164],[773,14],[788,16],[796,14],[836,20],[846,32],[849,32],[878,26],[908,16],[916,67],[930,12],[940,12],[1003,27],[1035,16],[1041,47],[1054,28],[1063,23],[1067,17],[1111,110],[1121,20],[1135,7]]);
  var out = shift([[596,28],[599,50],[609,17],[619,60],[635,160],[686,90],[699,150],[718,90],[734,70],[766,40],[846,18],[916,10],[1111,45]]);
  var inMax = shift([[587,26],[589,25],[592,19],[596,28],[607,30],[613,8],[619,9],[641,18],[651,15],[670,37],[676,13],[680,33],[724,17],[750,7],[846,31],[852,10],[866,11],[878,18],[916,9],[1009,35],[1041,16],[1054,26],[1067,11],[1111,2],[1121,8]]);
  var inn = shift([[596,13],[606,12],[724,17],[711,8],[846,9],[866,11],[870,8]]);
  function noise(from, to, envelope, base, dir) {
    var pts = [], seed = 7, x, t, k, h;
    for (x = from; x <= to; x += 2) {
      for (k = 0; k < envelope.length - 2 && envelope[k + 1][0] < x; k++) {}
      t = (x - envelope[k][0]) / (envelope[k + 1][0] - envelope[k][0]);
      h = envelope[k][1] + t * (envelope[k + 1][1] - envelope[k][1]);
      seed = (seed * 137 + 41) % 1009;
      pts.push([x, base + dir * Math.round(h * (0.45 + 0.6 * seed / 1009))]);
    }
    return pts;
  }
  var outEnv = [[570,16],[600,12],[640,3],[672,8],[690,13],[740,12],[790,14],[830,8],[880,6],[910,10],[960,6],[980,3],[990,12],[1020,6],[1060,5],[1090,2],[1125,6]];
  var inEnv = [[570,8],[630,6],[650,3],[672,5],[690,8],[740,6],[790,5],[820,4],[850,6],[880,5],[905,5],[930,3],[990,3],[1040,3],[1050,0],[1125,0]];
  document.getElementById('graph-east').innerHTML = chart({
    areas: spikes(inMax, 52, -1, IN_MAX) + spikes(outMax, 52, 1, OUT_MAX) +
      area(noise(571, 1125, outEnv.map(function (p) { return [p[0], p[1] * 1.4]; }), 52, 1), 52, OUT_MAX) +
      spikes(inn, 52, -1, IN) + spikes(out, 52, 1, OUT) +
      area(noise(571, 1050, inEnv, 52, -1), 52, IN) + area(noise(571, 1125, outEnv, 52, 1), 52, OUT) +
      '<path d="M562 52.500H1125" stroke="' + OUT + '"/>',
    vx: 57.7, vstep: 6.4, vmajor: 6, vphase: 0,
    nmin: -49, nmax: 7, zero: 52, hstep: 5.34, unit: 10,
    p95: [46], lx: 58, lstep: 76.8,
    labels: ['Sat 12:00','Sun 00:00','Sun 12:00','Mon 00:00','Mon 12:00','Tue 00:00','Tue 12:00','Wed 00:00','Wed 12:00','Thu 00:00','Thu 12:00','Fri 00:00','Fri 12:00','Sat 00:00']
  });

  /* preview thumbnails, 112 x 60 */
  function mini(vals, base, dir, k) {
    return vals.map(function (v, i) { return [i * 112 / (vals.length - 1), base + dir * v * k]; });
  }
  function squeeze(pts, from) {
    return pts.map(function (p) { return [from + (p[0] - 32) * (112 - from) / 80, p[1]]; });
  }
  function sp(l, b, d, f) { return spikes(l, b, d, f); }
  var wIn = [[32,44],[40,42],[46,44],[52,42],[54,36],[58,20],[64,30],[70,28],[76,27],[82,29],[88,27],[92,35],[96,42],[100,28],[105,33],[110,34],[112,40]];
  var wInMax = [[32,44],[39,42],[41,30],[43,44],[52,38],[55,11],[58,0],[60,20],[66,22],[70,15],[74,19],[78,18],[88,17],[92,22],[95,35],[98,22],[102,25],[106,25],[112,33]];
  var wOut = [[32,47],[54,50],[60,53],[66,52],[72,59],[78,53],[86,58],[92,53],[100,52],[106,58],[112,48]];
  function week(from, red) {
    return area(squeeze(wInMax, from), 46, IN_MAX) + area(squeeze(wOut.map(function (p) { return [p[0], Math.min(60, p[1] + 3)]; }), from), 46, OUT_MAX) +
      area(squeeze(wIn, from), 46, IN) + area(squeeze(wOut, from), 46, OUT) +
      '<rect x="' + (from - (112 - from) * 0.16) + '" y="46" width="' + ((112 - from) * 0.09) + '" height="1" fill="' + OUT + '"/>' + hline(red, 0, 112);
  }
  function burst(from, red, peaks) {
    var w = 112 - from;
    return area([[from,3],[from + w * 0.15,1],[from + w * 0.3,2],[from + w * 0.5,5],[from + w * 0.7,3],[from + w * 0.85,1],[112,5]], 8, IN_MAX) +
      area([[from,20],[from + w * 0.1,33],[from + w * 0.2,28],[from + w * 0.35,18],[from + w * 0.6,11],[112,13]], 8, OUT_MAX) + peaks +
      area([[from,11],[from + w * 0.2,14],[from + w * 0.5,11],[112,10]], 8, OUT) + hline(red, 0, 112);
  }
  var sets = {
    east: [
      '<path d="M0 5.500h13M24 5.500h11M46 5.500h2M82 5.500h30" stroke="' + OUT + '" stroke-width="2"/>' + sp([[27,55]], 5, 1, OUT) + sp([[58,5]], 5, -1, IN) + sp([[58,10]], 5, 1, OUT) + hline(4, 0, 112) + hline(7, 0, 112),
      '<path d="M0 15.500h112" stroke="' + OUT + '"/>' + sp([[15,15],[40,7],[49,11],[59,4],[99,4]], 15, -1, IN_MAX) + sp([[15,6],[49,10]], 15, -1, IN) + sp([[12,11],[40,19],[49,12],[55,9],[92,45],[99,8]], 16, 1, OUT_MAX) + area([[2,16],[10,19],[16,18],[24,16],[36,18],[48,19],[60,18],[80,16],[104,16],[108,18],[112,18]], 15, OUT) + sp([[92,24]], 16, 1, OUT) + hline(13, 0, 112) + hline(21, 0, 112),
      '<path d="M0 15.500h112" stroke="' + OUT + '"/>' + sp([[4,12],[16,7],[64,15],[75,6],[81,11],[106,5]], 15, -1, IN_MAX) + sp([[64,12]], 15, -1, IN) + area([[0,12],[12,11],[30,13],[50,14],[112,15]], 15.5, IN) + sp([[5,12],[16,8],[30,28],[62,10],[76,18],[84,9],[102,44]], 16, 1, OUT_MAX) + area([[0,18],[10,19],[25,18],[30,20],[50,17],[60,18],[70,17],[80,19],[90,17],[112,18]], 15, OUT) + sp([[30,12],[102,20]], 16, 1, OUT) + hline(12, 0, 112) + hline(20, 0, 112),
      burst(54, 6, sp([[56,25],[59,47],[65,52],[69,38],[74,29],[88,12],[110,22]], 8, 1, OUT_MAX)),
      burst(84, 6, sp([[86,49],[89,52],[92,38],[98,12],[111,22]], 8, 1, OUT_MAX)),
      burst(100, 7, sp([[102,52],[107,12],[110,22]], 8, 1, OUT_MAX)),
      burst(106, 7, sp([[108,52]], 8, 1, OUT_MAX)),
      '<path d="M111.500 0v8" stroke="' + IN_MAX + '"/><path d="M111.500 8v52" stroke="' + OUT_MAX + '"/>',
      ''
    ],
    ski: [
      area(mini(skiIn, 40, -1, 0.203), 40, IN) + area(mini(skiOut, 40, 1, 0.19), 40, OUT) + hline(8, 0, 112) + hline(57, 0, 112),
      area([[0,26],[5,18],[8,2],[10,18],[14,20],[20,6],[23,22],[30,18],[33,4],[36,18],[38,4],[41,14],[45,10],[50,17],[58,20],[62,16],[70,20],[77,17],[82,28],[88,17],[92,24],[99,20],[103,32],[112,37]], 40, IN_MAX) +
      area([[0,46],[12,52],[16,60],[20,55],[30,59],[60,60],[77,52],[80,45],[92,52],[104,50],[112,45]], 40, OUT_MAX) +
      area([[0,27],[5,20],[8,14],[12,22],[20,15],[25,23],[33,16],[40,13],[45,22],[50,17],[58,24],[65,20],[72,22],[78,20],[82,30],[88,23],[92,26],[98,28],[102,34],[108,37],[112,38]], 40, IN) +
      area([[0,44],[6,46],[12,50],[16,57],[20,53],[30,57],[60,58],[66,55],[72,53],[77,50],[80,44],[86,45],[92,49],[98,47],[104,48],[112,44]], 40, OUT) + hline(13, 0, 112) + hline(58, 0, 112),
      area([[0,10],[2,1],[5,14],[10,5],[14,12],[20,4],[24,8],[28,2],[33,12],[38,7],[42,24],[50,30],[58,28],[60,10],[66,16],[72,7],[78,16],[85,12],[90,15],[95,23],[102,20],[106,30],[112,37]], 41, IN_MAX) +
      area([[0,50],[10,56],[24,60],[35,52],[45,52],[64,57],[75,60],[88,59],[98,47],[104,53],[112,50]], 41, OUT_MAX) +
      area([[0,14],[5,20],[12,18],[20,14],[28,13],[35,16],[40,20],[44,28],[50,32],[58,30],[62,18],[66,22],[75,18],[85,22],[95,25],[102,23],[108,35],[112,38]], 41, IN) +
      area([[0,48],[5,50],[10,53],[24,57],[30,54],[35,49],[45,50],[52,46],[58,50],[64,54],[75,57],[88,56],[94,52],[98,45],[104,49],[112,47]], 41, OUT) + hline(13, 0, 112) + hline(57, 0, 112),
      week(32, 25), week(74, 27), week(95, 30), week(104, 40),
      '<path d="M111.500 0v46" stroke="' + IN_MAX + '"/><path d="M111.500 46v14" stroke="' + OUT_MAX + '"/>',
      ''
    ]
  };
  document.querySelectorAll('.thumbs').forEach(function (box) {
    sets[box.dataset.set].forEach(function (body, i) {
      box.children[i].insertAdjacentHTML('beforeend', '<svg viewBox="0 0 112 60">' + body + '</svg>');
    });
  });
})();
```
